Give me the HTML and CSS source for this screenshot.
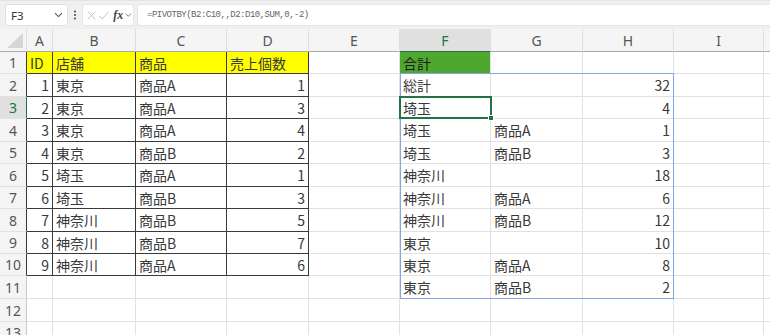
FILE: index.html
```html
<!DOCTYPE html>
<html lang="ja">
<head>
<meta charset="utf-8">
<link rel="stylesheet" href="styles.css">
</head>
<body>
<div class="toolbar">
  <div class="namebox"><span>F3</span>
    <svg width="9" height="6" viewBox="0 0 9 6"><path d="M1 1.2 L4.5 4.6 L8 1.2" fill="none" stroke="#555" stroke-width="1.1"/></svg>
  </div>
  <div class="dots"><svg width="4" height="12" viewBox="0 0 4 12"><circle cx="2" cy="2.5" r="1" fill="#444"/><circle cx="2" cy="6" r="1" fill="#444"/><circle cx="2" cy="9.5" r="1" fill="#444"/></svg></div>
  <div class="fxbox">
    <svg width="13" height="13" viewBox="0 0 13 13"><path d="M2 2 L11 11 M11 2 L2 11" stroke="#bdbdbd" stroke-width="1.1" fill="none"/></svg>
    <svg width="14" height="13" viewBox="0 0 14 13"><path d="M1.5 7 L5 10.5 L12.5 2" stroke="#bdbdbd" stroke-width="1.1" fill="none"/></svg>
    <span class="fx">fx</span>
    <svg width="8" height="6" viewBox="0 0 8 6"><path d="M1 1.5 L4 4.5 L7 1.5" fill="none" stroke="#666" stroke-width="1"/></svg>
  </div>
  <div class="formula">=PIVOTBY(B2:C10,,D2:D10,SUM,0,-2)</div>
</div>

<div class="sheet">
  <div class="row hdr">
    <div class="c corner"><svg width="17" height="16" viewBox="0 0 17 16"><path d="M16 0 L16 15 L0 15 Z" fill="#d6d6d6"/></svg></div>
    <div class="c ch">A</div><div class="c ch">B</div><div class="c ch">C</div><div class="c ch">D</div><div class="c ch">E</div><div class="c ch sel">F</div><div class="c ch">G</div><div class="c ch">H</div><div class="c ch">I</div><div class="c ch"></div>
  </div>

  <div class="row h22">
    <div class="c rh dk">1</div>
    <div class="c t y">ID</div><div class="c t y">店舗</div><div class="c t y">商品</div><div class="c t y">売上個数</div>
    <div class="c"></div><div class="c g">合計</div><div class="c"></div><div class="c"></div><div class="c"></div><div class="c"></div>
  </div>

  <div class="row h23">
    <div class="c rh dk">2</div>
    <div class="c t n">1</div><div class="c t">東京</div><div class="c t">商品A</div><div class="c t n">1</div>
    <div class="c"></div><div class="c">総計</div><div class="c"></div><div class="c n">32</div><div class="c"></div><div class="c"></div>
  </div>

  <div class="row h22">
    <div class="c rh dk rsel">3</div>
    <div class="c t n">2</div><div class="c t">東京</div><div class="c t">商品A</div><div class="c t n">3</div>
    <div class="c"></div><div class="c">埼玉</div><div class="c"></div><div class="c n">4</div><div class="c"></div><div class="c"></div>
  </div>

  <div class="row h23">
    <div class="c rh dk">4</div>
    <div class="c t n">3</div><div class="c t">東京</div><div class="c t">商品A</div><div class="c t n">4</div>
    <div class="c"></div><div class="c">埼玉</div><div class="c">商品A</div><div class="c n">1</div><div class="c"></div><div class="c"></div>
  </div>

  <div class="row h22">
    <div class="c rh dk">5</div>
    <div class="c t n">4</div><div class="c t">東京</div><div class="c t">商品B</div><div class="c t n">2</div>
    <div class="c"></div><div class="c">埼玉</div><div class="c">商品B</div><div class="c n">3</div><div class="c"></div><div class="c"></div>
  </div>

  <div class="row h23">
    <div class="c rh dk">6</div>
    <div class="c t n">5</div><div class="c t">埼玉</div><div class="c t">商品A</div><div class="c t n">1</div>
    <div class="c"></div><div class="c">神奈川</div><div class="c"></div><div class="c n">18</div><div class="c"></div><div class="c"></div>
  </div>

  <div class="row h22">
    <div class="c rh dk">7</div>
    <div class="c t n">6</div><div class="c t">埼玉</div><div class="c t">商品B</div><div class="c t n">3</div>
    <div class="c"></div><div class="c">神奈川</div><div class="c">商品A</div><div class="c n">6</div><div class="c"></div><div class="c"></div>
  </div>

  <div class="row h23">
    <div class="c rh dk">8</div>
    <div class="c t n">7</div><div class="c t">神奈川</div><div class="c t">商品B</div><div class="c t n">5</div>
    <div class="c"></div><div class="c">神奈川</div><div class="c">商品B</div><div class="c n">12</div><div class="c"></div><div class="c"></div>
  </div>

  <div class="row h22">
    <div class="c rh dk">9</div>
    <div class="c t n">8</div><div class="c t">神奈川</div><div class="c t">商品B</div><div class="c t n">7</div>
    <div class="c"></div><div class="c">東京</div><div class="c"></div><div class="c n">10</div><div class="c"></div><div class="c"></div>
  </div>

  <div class="row h22">
    <div class="c rh dk">10</div>
    <div class="c t n">9</div><div class="c t">神奈川</div><div class="c t">商品A</div><div class="c t n">6</div>
    <div class="c"></div><div class="c">東京</div><div class="c">商品A</div><div class="c n">8</div><div class="c"></div><div class="c"></div>
  </div>

  <div class="row h23">
    <div class="c rh">11</div>
    <div class="c"></div><div class="c"></div><div class="c"></div><div class="c"></div>
    <div class="c"></div><div class="c">東京</div><div class="c">商品B</div><div class="c n">2</div><div class="c"></div><div class="c"></div>
  </div>

  <div class="row h23">
    <div class="c rh">12</div>
    <div class="c"></div><div class="c"></div><div class="c"></div><div class="c"></div><div class="c"></div><div class="c"></div><div class="c"></div><div class="c"></div><div class="c"></div><div class="c"></div>
  </div>

  <div class="row h22">
    <div class="c rh">13</div>
    <div class="c"></div><div class="c"></div><div class="c"></div><div class="c"></div><div class="c"></div><div class="c"></div><div class="c"></div><div class="c"></div><div class="c"></div><div class="c"></div>
  </div>

  <div class="spill"></div>
  <div class="selection"><span class="handle"></span></div>
</div>
</body>
</html>
```

FILE: styles.css
```css
* { box-sizing: border-box; }
html, body { margin: 0; padding: 0; }
body {
  width: 770px;
  height: 335px;
  overflow: hidden;
  background: #ffffff;
  font-family: "Noto Sans CJK JP", "Noto Sans", sans-serif;
  color: #383838;
}

.toolbar {
  height: 29px;
  background: #f0f0f0;
  display: flex;
  align-items: flex-start;
  padding: 3px 0 0 5px;
  border-top: 1px solid #e4e4e4;
}
.namebox {
  width: 63px;
  height: 22px;
  background: #fff;
  border: 1px solid #e1e1e1;
  border-radius: 3px;
  display: flex;
  align-items: center;
  justify-content: space-between;
  padding: 0 4px 0 5px;
  font-family: "Noto Sans", sans-serif;
  font-size: 11.5px;
  color: #333;
}
.dots {
  width: 14px;
  height: 22px;
  display: flex;
  align-items: center;
  justify-content: center;
}
.fxbox {
  width: 52px;
  height: 22px;
  background: #fff;
  border: 1px solid #e6e6e6;
  border-radius: 3px;
  display: flex;
  align-items: center;
  gap: 1px;
  padding: 0 1px 0 3px;
}
.fx {
  font-family: "Liberation Serif", serif;
  font-style: italic;
  font-weight: bold;
  font-size: 12px;
  color: #444;
  padding: 0 1px 0 2px;
}
.formula {
  flex: 1;
  margin-left: 3px;
  height: 22px;
  background: #fff;
  border: 1px solid #e6e6e6;
  border-right: none;
  border-radius: 3px 0 0 3px;
  display: flex;
  align-items: center;
  padding-left: 9px;
  font-family: "Liberation Mono", monospace;
  font-size: 9px;
  letter-spacing: -0.5px;
  color: #666;
}

.sheet {
  position: relative;
}
.row {
  display: grid;
  grid-template-columns: 27px 26px 83px 91px 82px 91px 91px 92px 91px 90px 6px;
}
.h22 { height: 22px; }
.h23 { height: 23px; }
.hdr { height: 23px; background: #f5f5f5; }

.c {
  border-right: 1px solid #e1e1e1;
  border-bottom: 1px solid #e1e1e1;
  display: flex;
  align-items: center;
  padding: 0 3px;
  font-size: 14px;
  line-height: 1;
  white-space: nowrap;
  overflow: hidden;
}
.n { justify-content: flex-end; }

.ch {
  justify-content: center;
  background: #f5f5f5;
  color: #555;
  font-family: "Noto Sans", sans-serif;
  font-size: 14px;
  border-right: 1px solid #dedede;
  border-bottom: 1px solid #a9a9a9;
  padding-top: 2px;
}
.ch.sel {
  background: #e0e0e0;
  color: #217346;
  border-bottom: 1px solid #217346;
}
.corner {
  background: #f5f5f5;
  border-right: 1px solid #dedede;
  border-bottom: 1px solid #a9a9a9;
  justify-content: flex-end;
  align-items: flex-end;
  padding: 0 2px 2px 0;
}
.rh {
  justify-content: center;
  background: #f5f5f5;
  color: #555;
  font-family: "Noto Sans", sans-serif;
  font-size: 14px;
  border-right: 1px solid #c8c8c8;
  border-bottom: 1px solid #e1e1e1;
  padding: 1px 0 0 0;
}
.rh.dk { border-right-color: #3a3a3a; }
.rh.rsel {
  background: #e0e0e0;
  color: #217346;
  border-right: 1px solid #217346;
}

.t {
  border-right-color: #3a3a3a;
  border-bottom-color: #3a3a3a;
}
.y { background: #ffff00; }
.g { background: #4ea72e; color: #1a1a1a; }

.spill {
  position: absolute;
  left: 400px;
  top: 44px;
  width: 274px;
  height: 226px;
  border: 1px solid #86a6df;
  pointer-events: none;
}
.selection {
  position: absolute;
  left: 399px;
  top: 67px;
  width: 93px;
  height: 23px;
  border: 2px solid #217346;
}
.handle {
  position: absolute;
  right: -4px;
  bottom: -4px;
  width: 6px;
  height: 6px;
  background: #217346;
  border: 1px solid #fff;
}
```
